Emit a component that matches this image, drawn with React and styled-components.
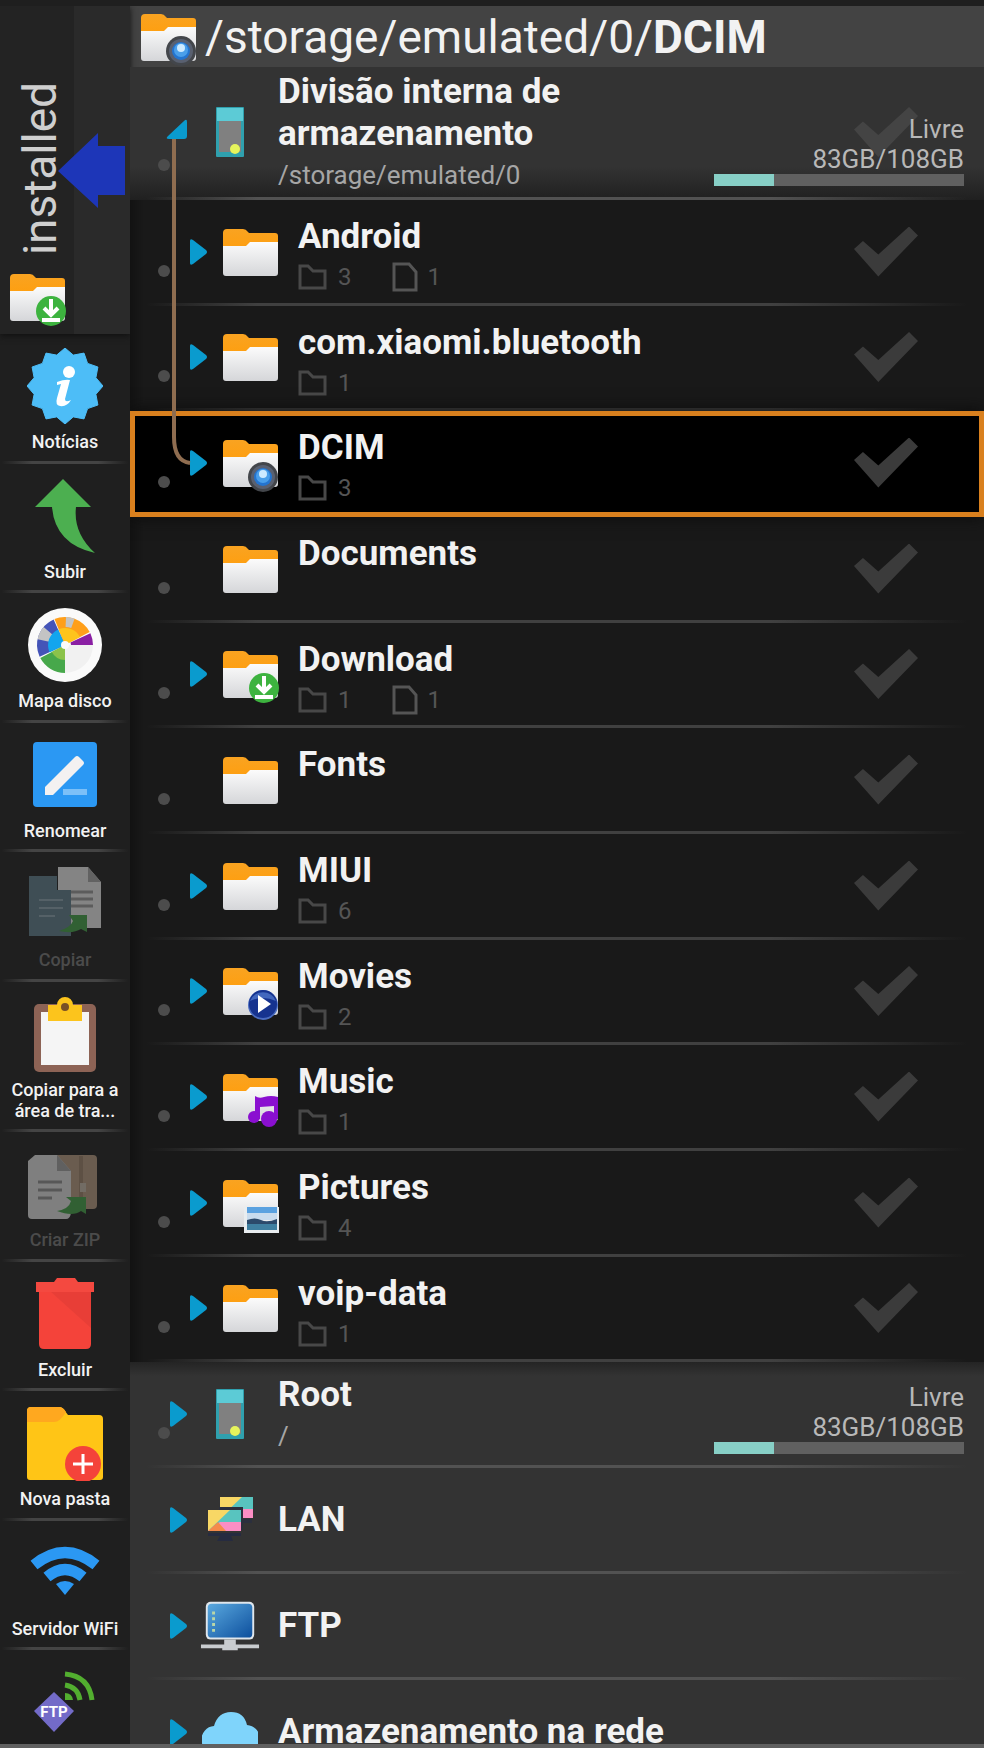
import styled, { createGlobalStyle, css } from 'styled-components';

const GlobalStyle = createGlobalStyle`
  * {
    box-sizing: border-box;
  }
  body {
    margin: 0;
    background-color: #1f1f1f;
    font-family: Roboto, 'Liberation Sans', sans-serif;
    color: #f2f2f2;
  }
  button {
    padding: 0;
    border: none;
    background: none;
    font-family: inherit;
    color: inherit;
    cursor: pointer;
  }
`;

const Screen = styled.div`
  display: flex;
  flex-direction: column;
  height: 100vh;
  padding-top: 6px;
  overflow: hidden;
`;

const Body = styled.div`
  display: flex;
  flex: 1;
  min-height: 0;
  overflow: hidden;
`;

const BottomEdge = styled.div`
  flex: none;
  height: 4px;
  background-color: #606060;
`;

/* ---------- sidebar ---------- */

const Sidebar = styled.nav`
  flex: none;
  width: 130px;
  background-color: #1f1f1f;
`;

const PaneSwitch = styled.div`
  position: relative;
  display: flex;
  height: 328px;
  background-color: #2a2a2a;
  box-shadow: 0 2px 6px #111;
`;

const PaneTab = styled.button`
  display: flex;
  flex-direction: column;
  align-items: center;
  justify-content: flex-end;
  gap: 12px;
  width: 74px;
  padding-bottom: 7px;
  background-color: #232323;
`;

const PaneName = styled.span`
  writing-mode: vertical-rl;
  transform: rotate(180deg);
  padding-right: 6px;
  font-size: 46px;
  line-height: 56px;
  color: #cfcfcf;
`;

const Pointer = styled.svg`
  position: absolute;
  left: 58px;
  top: 126px;
`;

const Tools = styled.ul`
  margin: 0;
  padding: 0;
  list-style: none;
`;

const ToolItem = styled.li`
  padding-bottom: 9px;
  border-bottom: 3px solid;
  border-image: linear-gradient(90deg, transparent 2%, #444 25%, #444 75%, transparent 98%) 1;

  &:nth-child(even) {
    padding-bottom: 8px;
  }
`;

const Tool = styled.button`
  display: flex;
  flex-direction: column;
  align-items: center;
  gap: 7px;
  width: 100%;
  padding: 14px 4px 0;
  opacity: ${({ disabled }) => (disabled ? 0.5 : 1)};
`;

const ToolLabel = styled.span`
  font-size: 18px;
  line-height: 21px;
  font-weight: 500;
  color: ${({ $dim }) => ($dim ? '#777' : '#f2f2f2')};
`;

/* ---------- file list ---------- */

const Main = styled.main`
  display: flex;
  flex-direction: column;
  flex: 1;
  min-width: 0;
`;

const PathBar = styled.header`
  display: flex;
  align-items: center;
  flex: none;
  gap: 7px;
  height: 61px;
  padding-left: 8px;
  background-color: #434343;
`;

const PathText = styled.h1`
  margin: 0;
  font-size: 46px;
  line-height: 56px;
  font-weight: 400;
  white-space: nowrap;
`;

const Tree = styled.div`
  position: relative;
  flex: 1;
  min-height: 0;
  overflow: hidden;
  background-color: #333;
`;

const line = (color) => css`
  border-bottom: 3px solid;
  border-image: linear-gradient(90deg, transparent 2%, ${color} 15%, ${color} 75%, transparent 98%) 1;
`;

const Row = styled.div`
  position: relative;
  display: flex;
  align-items: center;
  height: 106px;
  padding-left: 28px;
`;

const RootRow = styled(Row)`
  ${line('#525252')}
  height: ${({ $open }) => ($open ? '133px' : '106px')};
  background: ${({ $open, $first }) =>
    $open
      ? 'linear-gradient(#333 75%, #202020)'
      : $first
        ? 'linear-gradient(#242424, #333 14px)'
        : '#333'};
  background-origin: border-box;
`;

const Folders = styled.div`
  background: linear-gradient(90deg, #121212, #191919 14px);
`;

const FolderRow = styled(Row)`
  ${line('#404040')}

  &:nth-child(3n - 1) {
    height: 105px;
  }
  ${({ $selected }) =>
    $selected &&
    css`
      z-index: 1;
      border-image: none;
      border-bottom-color: #d9801e;
      background-color: #000;
      box-shadow:
        inset 5px 5px 0 #d9801e,
        inset -5px -2px 0 #d9801e,
        0 0 16px #0a0a0a;
    `}
`;

const Dot = styled.span`
  align-self: flex-end;
  width: 12px;
  height: 12px;
  margin-right: ${({ $nested }) => ($nested ? '20px' : '0')};
  margin-bottom: 26px;
  border-radius: 50%;
  background-color: ${({ $hidden }) => ($hidden ? 'transparent' : '#4c4c4c')};
`;

const Expander = styled.button`
  display: flex;
  justify-content: center;
  width: 17px;
  margin-right: 13px;
  visibility: ${({ $empty }) => ($empty ? 'hidden' : 'visible')};
`;

const IconSlot = styled.span`
  display: flex;
  justify-content: center;
  width: 60px;
  margin-right: 18px;
`;

const Info = styled.div`
  align-self: ${({ $nested }) => ($nested ? 'flex-start' : 'center')};
  padding-top: ${({ $nested }) => ($nested ? '16px' : '0')};
`;

const Name = styled.div`
  font-size: 35px;
  line-height: 42px;
  font-weight: 700;
  white-space: pre-line;
`;

const SubPath = styled.div`
  margin: 6px 0 4px;
  font-size: 26px;
  line-height: 28px;
  color: #a6a6a6;
`;

const Meta = styled.div`
  display: flex;
  gap: 40px;
  margin-top: 4px;
`;

const Count = styled.span`
  display: flex;
  align-items: center;
  gap: 10px;
  height: 30px;
  font-size: 24px;
  line-height: 30px;
  color: #555;
`;

const Check = styled.input`
  appearance: none;
  flex: none;
  width: 64px;
  height: 50px;
  margin: 0 66px 0 auto;
  background-color: ${({ $root }) => ($root ? '#444' : '#3b3b3b')};
  clip-path: polygon(0 45%, 14% 29%, 38% 56%, 86% 0, 100% 18%, 38% 100%);
`;

const Space = styled.div`
  position: absolute;
  right: 20px;
  bottom: 11px;
  width: 250px;
  font-size: 26px;
  line-height: 30px;
  text-align: right;
  color: #b8b8b8;
`;

const Meter = styled.div`
  height: 12px;
  background-color: #606060;
`;

const MeterFill = styled.div`
  height: 100%;
  background-color: #87cfc6;
`;

const Branch = styled.svg`
  position: absolute;
  left: 36px;
  top: 52px;
  z-index: 2;
`;

/* ---------- icons ---------- */

const badges = {
  camera: (
    <g>
      <circle cx="43" cy="44" r="15" fill="#43464b" />
      <circle cx="43" cy="44" r="12" fill="#596070" />
      <circle cx="43" cy="44" r="9" fill="#2474cf" />
      <circle cx="43" cy="43" r="7" fill="#4a9fea" />
      <circle cx="43" cy="41" r="4" fill="#cdeaff" />
    </g>
  ),
  download: (
    <g>
      <circle cx="44" cy="44" r="15" fill="#3db33f" />
      <path d="M44 32v15M37 41l7 7 7-7M35 53h18" fill="none" stroke="#fff" strokeWidth="4" />
    </g>
  ),
  play: (
    <g>
      <circle cx="43" cy="44" r="15" fill="#4a6cc0" />
      <circle cx="43" cy="43" r="14" fill="#16338f" />
      <path d="M30 40a14 14 0 0 1 26 0q-13-6-26 0z" fill="#4267bd" />
      <path d="M38 34l13 9-13 9z" fill="#fff" />
    </g>
  ),
  music: (
    <g fill="#8a0fd0">
      <path d="M35 29q4 3 9 1 7-2 14 0v22h-4V39l-14 1v12h-5z" />
      <circle cx="34" cy="50" r="6" />
      <circle cx="49" cy="52" r="8" />
    </g>
  ),
  picture: (
    <g>
      <rect x="24" y="34" width="35" height="26" fill="#e9edf0" />
      <rect x="27" y="34" width="30" height="6" fill="#5ba2e0" />
      <rect x="27" y="40" width="30" height="7" fill="#c9dcee" />
      <path d="M27 47q8-3 14 0t16-1v6H27z" fill="#2c4a6b" />
      <rect x="27" y="51" width="30" height="6" fill="#3f7fa0" />
    </g>
  ),
};

const FolderIcon = ({ badge }) => (
  <svg width="60" height="60" viewBox="0 0 60 60" aria-hidden="true">
    <defs>
      <linearGradient id="flap" x1="0" y1="0" x2="0" y2="1">
        <stop offset="0" stopColor="#f9a321" />
        <stop offset="1" stopColor="#ff9e0d" />
      </linearGradient>
      <linearGradient id="front" x1="0" y1="0" x2="0" y2="1">
        <stop offset="0" stopColor="#fbfbfb" />
        <stop offset="1" stopColor="#d5d6d9" />
      </linearGradient>
    </defs>
    <path d="M3 11q0-4 4-4h16q3 0 5 3l1 1h26q3 0 3 3v16H3z" fill="url(#flap)" />
    <path d="M3 24h23l4-4h28v31q0 3-3 3H6q-3 0-3-3z" fill="url(#front)" />
    {badges[badge]}
  </svg>
);

const PhoneIcon = () => (
  <svg width="28" height="50" viewBox="0 0 28 50" aria-hidden="true">
    <rect width="28" height="50" rx="1" fill="#2fa0ae" />
    <rect x="1" y="1" width="26" height="13" fill="#5ccbd6" />
    <rect x="3" y="14" width="22" height="31" fill="#808080" />
    <circle cx="19" cy="42" r="5" fill="#e6f45c" />
  </svg>
);

const LanScreen = ({ x, y }) => (
  <g transform={`translate(${x} ${y})`}>
    <rect width="33" height="21" fill="#58c4bf" />
    <path d="M0 0h22L0 21z" fill="#f8d765" />
    <path d="M0 21L12 12h21v9z" fill="#fb8ec4" />
    <path d="M0 21L10 12l8 9z" fill="#f58a4b" />
  </g>
);

const LanIcon = () => (
  <svg width="60" height="60" viewBox="0 0 60 60" aria-hidden="true">
    <LanScreen x={20} y={7} />
    <path d="M19 17h23v3H19zM41 17h2v23h-2zM43 29h9v4h-9z" fill="#2b2f3d" />
    <LanScreen x={8} y={20} />
    <path d="M8 43h33v3H31l2 5H17l3-5H8z" fill="#262b40" />
  </svg>
);

const FtpIcon = () => (
  <svg width="62" height="52" viewBox="0 0 62 52" aria-hidden="true">
    <defs>
      <linearGradient id="screen" x1="0" y1="0" x2="1" y2="1">
        <stop offset="0" stopColor="#5aa9df" />
        <stop offset="1" stopColor="#0d4f9d" />
      </linearGradient>
    </defs>
    <rect x="6" y="1" width="50" height="39" rx="5" fill="#dfe6ec" />
    <rect x="8" y="3" width="46" height="35" rx="4" fill="url(#screen)" />
    <path d="M14 11v22" stroke="#b9d6a8" strokeWidth="3" strokeDasharray="3 3" />
    <path d="M25 40h12v5h24v4H39v2H23v-2H1v-4h24z" fill="#c9cccf" />
  </svg>
);

const CloudIcon = () => (
  <svg width="56" height="42" viewBox="0 0 56 42" aria-hidden="true">
    <path d="M14 42a13 13 0 0 1-2-27q4-14 17-14t16 13a14 14 0 0 1-2 28z" fill="#7fd4fb" />
  </svg>
);

const SmallFolder = () => (
  <svg width="30" height="26" viewBox="0 0 30 26" fill="none" stroke="#484848" strokeWidth="3" aria-hidden="true">
    <path d="M2 24V2h8l5 5h12v17z" />
  </svg>
);

const SmallFile = () => (
  <svg width="26" height="30" viewBox="0 0 26 30" fill="none" stroke="#555" strokeWidth="3" aria-hidden="true">
    <path d="M2 28V2h15l7 8v18z" />
  </svg>
);

const Triangle = () => (
  <svg width="17" height="26" viewBox="0 0 17 26" aria-hidden="true">
    <path d="M0 2q0-3 3-1l13 10q2 2 0 4L3 25q-3 2-3-1z" fill="#0a9bce" />
  </svg>
);

const OpenTriangle = () => (
  <svg width="20" height="26" viewBox="0 0 20 26" overflow="visible" aria-hidden="true">
    <path d="M15 2q3-3 3 1v14q0 3-3 3H0q-4 0-1-3z" fill="#0a9bce" />
  </svg>
);

const ToolSvg = ({ children }) => (
  <svg width="76" height="76" viewBox="0 0 76 76" aria-hidden="true">
    {children}
  </svg>
);

const polar = (r, deg) => {
  const a = (deg * Math.PI) / 180;
  return `${(38 + r * Math.cos(a)).toFixed(1)} ${(38 + r * Math.sin(a)).toFixed(1)}`;
};

const starPoints = Array.from({ length: 24 }, (_, i) => polar(i % 2 ? 32 : 38, i * 15)).join(' ');

const Wedge = ({ from, to, r0, r1, fill }) => (
  <path
    d={`M${polar(r0, from)}L${polar(r1, from)}A${r1} ${r1} 0 0 1 ${polar(r1, to)}L${polar(r0, to)}A${r0} ${r0} 0 0 0 ${polar(r0, from)}z`}
    fill={fill}
  />
);

const toolIcons = {
  news: (
    <ToolSvg>
      <polygon points={starPoints} fill="#4dbdf7" stroke="#4dbdf7" strokeWidth="1" strokeLinejoin="round" />
      <circle cx="42" cy="24" r="6" fill="#fff" />
      <path d="M30 34q8-3 13-2l-5 19q0 4 6 1-4 7-11 6-5-1-3-8l4-14-4 1z" fill="#fff" />
    </ToolSvg>
  ),
  up: (
    <ToolSvg>
      <path d="M36 1l28 28H49q-3 26 19 46Q28 66 25 29H8z" fill="#4caf50" />
    </ToolSvg>
  ),
  disk: (
    <ToolSvg>
      <circle cx="38" cy="38" r="37" fill="#fafafa" />
      <path d="M38 38h28a28 28 0 0 1-28 28z" fill="#f1f1f1" />
      <Wedge from={-25} to={0} r0={6} r1={28} fill="#8a1fa3" />
      <Wedge from={-112} to={-28} r0={3} r1={28} fill="#ff9f1a" />
      <Wedge from={-112} to={-28} r0={3} r1={17} fill="#fec41c" />
      <Wedge from={-88} to={-70} r0={18} r1={28} fill="#c4c4c4" />
      <Wedge from={-205} to={-114} r0={3} r1={28} fill="#4454b8" />
      <Wedge from={-168} to={-140} r0={16} r1={28} fill="#c4c4c4" />
      <Wedge from={-205} to={-114} r0={3} r1={17} fill="#12a5ee" />
      <Wedge from={90} to={152} r0={3} r1={28} fill="#47a84b" />
      <Wedge from={90} to={152} r0={3} r1={15} fill="#8bc34a" />
      <circle cx="38" cy="38" r="4" fill="#fafafa" />
    </ToolSvg>
  ),
  rename: (
    <ToolSvg>
      <rect x="6" y="5" width="64" height="65" rx="4" fill="#2b98f3" />
      <rect x="36" y="52" width="24" height="6" fill="#7cc0f8" />
      <path d="M18 50l30-30q2-2 4 0l4 4q2 2 0 4L26 58h-8z" fill="#f3f1f1" />
    </ToolSvg>
  ),
  copy: (
    <ToolSvg>
      <path d="M31 1h30l13 15v46H31z" fill="#e8e8e8" />
      <path d="M61 1l13 15H61z" fill="#a5a5a5" />
      <path d="M42 26h24M42 33h24M42 40h24" stroke="#9a9a9a" strokeWidth="3" />
      <path d="M2 10h28v14h14v46H2z" fill="#607d8b" />
      <path d="M12 34h24M12 42h24M12 50h16" stroke="#8ba3ae" strokeWidth="2" />
      <path d="M32 65q12-4 14-10l-4-6h18v17l-6-3q-8 5-22 2z" fill="#43a047" />
    </ToolSvg>
  ),
  clipboard: (
    <ToolSvg>
      <rect x="7" y="8" width="62" height="68" rx="5" fill="#8d6355" />
      <rect x="14" y="16" width="48" height="53" fill="#f5f5f5" />
      <path d="M21 9h9a8 8 0 0 1 16 0h9v16H21z" fill="#fcc41c" />
      <circle cx="38" cy="11" r="4" fill="#795026" />
    </ToolSvg>
  ),
  zip: (
    <ToolSvg>
      <rect x="22" y="9" width="48" height="54" rx="4" fill="#b59a80" />
      <path d="M54 10v50" stroke="#9b826a" strokeWidth="4" />
      <rect x="53" y="37" width="6" height="9" fill="#c5b8a8" />
      <path d="M8 9h22l14 16v42q-1 6-5 6H5q-4 0-4-4V15z" fill="#dedede" />
      <path d="M30 9l14 16H30z" fill="#a0a0a0" />
      <path d="M11 36h24M11 44h24M11 52h14" stroke="#8f8f8f" strokeWidth="3" />
      <path d="M30 65q12-2 14-10l-5-4h20v17l-5-3q-8 6-24 0z" fill="#43a047" />
    </ToolSvg>
  ),
  trash: (
    <ToolSvg>
      <path d="M9 6h18l3-4h18l3 4h16v10H9z" fill="#f44940" />
      <path d="M12 16h52v52q0 5-5 5H17q-5 0-5-5z" fill="#f4433a" />
      <path d="M24 16h40v36z" fill="#e03c36" opacity=".6" />
    </ToolSvg>
  ),
  newFolder: (
    <ToolSvg>
      <path d="M0 6q0-4 4-4h28q4 0 6 4l3 4h31q4 0 4 4v58q0 3-3 3H3q-3 0-3-3z" fill="#ffc516" />
      <path d="M0 6q0-4 4-4h28q4 0 7 5-6 10-12 10H0z" fill="#ffa81f" />
      <circle cx="56" cy="59" r="18" fill="#f4433a" />
      <path d="M46 59h20M56 49v20" stroke="#fff" strokeWidth="3" />
    </ToolSvg>
  ),
  wifi: (
    <ToolSvg>
      <path d="M7 30Q38 5 69 30M20 42q18-15 36 0" fill="none" stroke="#2b98f3" strokeWidth="11" />
      <path d="M29 49q9-6 18 0l-9 11z" fill="#2b98f3" />
    </ToolSvg>
  ),
  ftp: (
    <ToolSvg>
      <path d="M27 28l20 19-20 21L7 47z" fill="#736bc8" />
      <text x="27" y="53" fontSize="15" fontWeight="700" textAnchor="middle" fill="#fff">
        FTP
      </text>
      <path d="M38 10q24 2 27 26M38 21q13 2 15 15" fill="none" stroke="#52ae2f" strokeWidth="5" />
      <path d="M38 29q7 0 8 7h-8z" fill="#52ae2f" />
    </ToolSvg>
  ),
};

/* ---------- data ---------- */

const tools = [
  { icon: 'news', label: 'Notícias' },
  { icon: 'up', label: 'Subir' },
  { icon: 'disk', label: 'Mapa disco' },
  { icon: 'rename', label: 'Renomear' },
  { icon: 'copy', label: 'Copiar', disabled: true },
  { icon: 'clipboard', label: 'Copiar para a área de tra...' },
  { icon: 'zip', label: 'Criar ZIP', disabled: true },
  { icon: 'trash', label: 'Excluir' },
  { icon: 'newFolder', label: 'Nova pasta' },
  { icon: 'wifi', label: 'Servidor WiFi' },
  { icon: 'ftp' },
];

const folders = [
  { name: 'Android', dirs: 3, files: 1 },
  { name: 'com.xiaomi.bluetooth', dirs: 1 },
  { name: 'DCIM', dirs: 3, badge: 'camera', selected: true },
  { name: 'Documents' },
  { name: 'Download', dirs: 1, files: 1, badge: 'download' },
  { name: 'Fonts' },
  { name: 'MIUI', dirs: 6 },
  { name: 'Movies', dirs: 2, badge: 'play' },
  { name: 'Music', dirs: 1, badge: 'music' },
  { name: 'Pictures', dirs: 4, badge: 'picture' },
  { name: 'voip-data', dirs: 1 },
];

const roots = [
  { name: 'Root', path: '/', icon: <PhoneIcon />, space: true },
  { name: 'LAN', icon: <LanIcon /> },
  { name: 'FTP', icon: <FtpIcon /> },
  { name: 'Armazenamento na rede', icon: <CloudIcon /> },
];

const usedPercent = 24;

const FreeSpace = () => (
  <Space>
    <div>Livre</div>
    <div>83GB/108GB</div>
    <Meter>
      <MeterFill style={{ width: `${usedPercent}%` }} />
    </Meter>
  </Space>
);

const Folder = ({ name, dirs, files, badge, selected }) => (
  <FolderRow $selected={selected}>
    <Dot $nested />
    <Expander $empty={!dirs} aria-label={name}>
      <Triangle />
    </Expander>
    <IconSlot>
      <FolderIcon badge={badge} />
    </IconSlot>
    <Info $nested>
      <Name>{name}</Name>
      <Meta>
        {dirs && (
          <Count>
            <SmallFolder />
            {dirs}
          </Count>
        )}
        {files && (
          <Count>
            <SmallFile />
            {files}
          </Count>
        )}
      </Meta>
    </Info>
    <Check type="checkbox" aria-label={name} />
  </FolderRow>
);

const App = () => {
  return (
    <Screen>
      <GlobalStyle />
      <Body>
        <Sidebar>
          <PaneSwitch>
            <PaneTab>
              <PaneName>installed</PaneName>
              <FolderIcon badge="download" />
            </PaneTab>
            <Pointer width="68" height="78" viewBox="0 0 68 78" aria-hidden="true">
              <path d="M0 39L40 1v13h27v49H40v13z" fill="#1d36b8" />
            </Pointer>
          </PaneSwitch>
          <Tools>
            {tools.map(({ icon, label, disabled }) => (
              <ToolItem key={icon}>
                <Tool disabled={disabled} aria-label={label || 'FTP'}>
                  {toolIcons[icon]}
                  {label && <ToolLabel $dim={disabled}>{label}</ToolLabel>}
                </Tool>
              </ToolItem>
            ))}
          </Tools>
        </Sidebar>
        <Main>
          <PathBar>
            <FolderIcon badge="camera" />
            <PathText>
              /storage/emulated/0/<b>DCIM</b>
            </PathText>
          </PathBar>
          <Tree>
            <RootRow $open>
              <Dot />
              <Expander aria-label="Divisão interna">
                <OpenTriangle />
              </Expander>
              <IconSlot>
                <PhoneIcon />
              </IconSlot>
              <Info>
                <Name>{'Divisão interna de\narmazenamento'}</Name>
                <SubPath>/storage/emulated/0</SubPath>
              </Info>
              <Check type="checkbox" $root aria-label="Divisão interna" />
              <FreeSpace />
            </RootRow>
            <Folders>
              {folders.map((folder) => (
                <Folder key={folder.name} {...folder} />
              ))}
            </Folders>
            {roots.map(({ name, path, icon, space }, i) => (
              <RootRow key={name} $first={i === 0}>
                <Dot $hidden={!path} />
                <Expander aria-label={name}>
                  <Triangle />
                </Expander>
                <IconSlot>{icon}</IconSlot>
                <Info>
                  <Name>{name}</Name>
                  {path && <SubPath>{path}</SubPath>}
                </Info>
                {space && <FreeSpace />}
              </RootRow>
            ))}
            {/* links the open storage to the selected folder */}
            <Branch width="26" height="350" viewBox="0 0 26 350" aria-hidden="true">
              <path d="M8 20v298q0 24 16 26" fill="none" stroke="#8f6d50" strokeWidth="4" />
            </Branch>
          </Tree>
        </Main>
      </Body>
      <BottomEdge />
    </Screen>
  );
};

export default App;
